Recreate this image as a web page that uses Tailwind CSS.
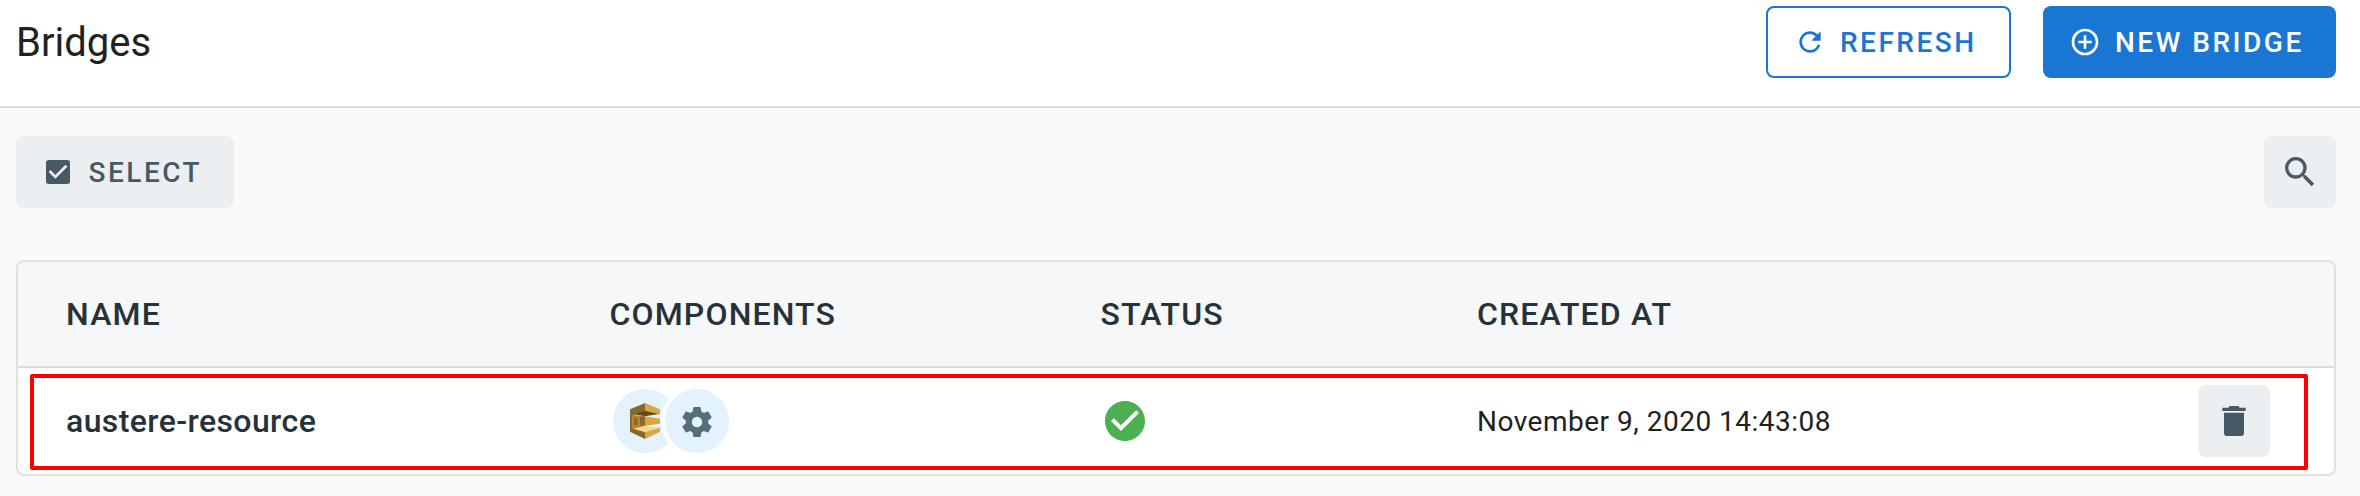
<!DOCTYPE html>
<html lang="en">
<head>
<meta charset="utf-8">
<title>Bridges</title>
<script src="https://cdn.jsdelivr.net/npm/@tailwindcss/browser@4"></script>
</head>
<body class="h-[496px] w-[2360px] overflow-hidden bg-[#fafafa] font-[Roboto,sans-serif] text-[#212121]">
<header class="flex h-[108px] items-start justify-between border-b-2 border-[#dcdcdc] bg-white pt-1.5 pr-6 pl-4">
  <h1 class="flex h-[72px] items-center pt-0.5 text-[40px]">Bridges</h1>
  <div class="flex gap-8 text-[28px] font-medium tracking-[2.5px]">
    <button class="flex h-[72px] w-[245px] items-center gap-3.5 rounded-lg border-2 border-[#1976d2] pl-6.5 text-[#1976d2]">
      <svg class="size-8" viewBox="0 0 24 24" fill="currentColor"><path d="M17.65 6.35A7.958 7.958 0 0 0 12 4a8 8 0 0 0-8 8 8 8 0 0 0 8 8c3.73 0 6.84-2.55 7.73-6h-2.08A5.99 5.99 0 0 1 12 18a6 6 0 0 1-6-6 6 6 0 0 1 6-6c1.66 0 3.14.69 4.22 1.78L13 11h7V4z"/></svg>
      <span class="pt-0.5">REFRESH</span>
    </button>
    <button class="flex h-[72px] w-[293px] items-center gap-3.5 rounded-lg bg-[#1976d2] pl-6.5 text-white">
      <svg class="size-8" viewBox="0 0 24 24" fill="currentColor"><path d="M12 20a8 8 0 1 1 0-16 8 8 0 0 1 0 16m0-18a10 10 0 1 0 0 20 10 10 0 0 0 0-20m1 5h-2v4H7v2h4v4h2v-4h4v-2h-4z"/></svg>
      <span class="pt-0.5">NEW BRIDGE</span>
    </button>
  </div>
</header>
<main class="pt-7 pr-6 pl-4">
  <div class="flex justify-between text-[#455a64]">
    <button class="flex h-[72px] w-[218px] items-center gap-[14.5px] rounded-lg bg-[#eceff1] pl-6.5 text-[28px] font-medium tracking-[2.5px]">
      <svg class="size-8" viewBox="0 0 24 24" fill="currentColor"><path d="M10 17l-5-5 1.410-1.420L10 14.170l7.590-7.590L19 8m0-5H5c-1.110 0-2 .89-2 2v14a2 2 0 0 0 2 2h14a2 2 0 0 0 2-2V5a2 2 0 0 0-2-2z"/></svg>
      <span class="pt-0.5">SELECT</span>
    </button>
    <button class="flex size-[72px] items-center justify-center rounded-lg bg-[#eceff1]" aria-label="Search">
      <svg class="size-10" viewBox="0 0 24 24" fill="currentColor"><path d="M9.500 3A6.500 6.500 0 0 1 16 9.500c0 1.610-.59 3.090-1.560 4.230l.27.27h.79l5 5-1.500 1.500-5-5v-.79l-.27-.27A6.520 6.520 0 0 1 9.500 16a6.500 6.500 0 1 1 0-13m0 2a4.500 4.500 0 1 0 0 9 4.500 4.500 0 0 0 0-9"/></svg>
    </button>
  </div>
  <section class="relative mt-[52px] h-[216px] overflow-hidden rounded-lg border-2 border-[#e0e0e0] bg-white">
    <div class="grid h-[106px] grid-cols-[543.5px_491px_376.5px_1fr] items-center border-b-2 border-[#d9dadb] bg-[#f5f7f9] pl-12 text-[32px] font-medium tracking-[1.15px] text-[#263238]">
      <div>NAME</div><div>COMPONENTS</div><div>STATUS</div><div>CREATED AT</div>
    </div>
    <div class="grid h-[106px] grid-cols-[543px_491.5px_376.5px_1fr_72px] items-center pr-16 pl-12">
      <div class="text-[32px] font-medium tracking-[0.4px] text-[#263238]">austere-resource</div>
      <div class="flex">
        <div class="flex size-[72px] items-center justify-center rounded-full border-4 border-white bg-[#e3f2fd]">
          <svg class="h-9 w-[30px]" viewBox="0 0 90 108">
            <path fill="#876929" d="M0 19 45 0v24L11 35v6L0 38z"/>
            <path fill="#d9a741" d="M45 0 90 19v15L45 24z"/>
            <path fill="#624a1e" d="M11 34 45 23l42 10-42 7z"/>
            <path fill="#876929" d="M0 34h9v48l-9-3z"/>
            <path fill="#b6852f" d="M6 36 45 39v32L6 78z"/>
            <path fill="#876929" d="M12 44l10-1v24l-10-1zM30 41l15-1v28l-15-1z"/>
            <path fill="#d9a741" d="M45 40 90 47v15L45 68z"/>
            <path fill="#fad791" d="M9 78 45 68l45 6-45 15z"/>
            <path fill="#876929" d="M0 74 45 88v20L0 86z"/>
            <path fill="#d9a741" d="M45 88 90 74v12L45 108z"/>
          </svg>
        </div>
        <div class="-ml-5 flex size-[72px] items-center justify-center rounded-full border-4 border-white bg-[#e3f2fd] text-[#546e7a]">
          <svg class="mt-px size-9" viewBox="0 0 24 24" fill="currentColor"><path d="M12 15.5A3.5 3.5 0 0 1 8.5 12 3.5 3.5 0 0 1 12 8.5a3.5 3.5 0 0 1 3.5 3.5 3.5 3.5 0 0 1-3.5 3.5m7.43-2.53c.04-.32.07-.64.07-.97 0-.33-.03-.66-.07-1l2.11-1.63c.19-.15.24-.42.12-.64l-2-3.46c-.12-.22-.39-.31-.61-.22l-2.49 1c-.52-.39-1.06-.73-1.69-.98l-.37-2.65A.506.506 0 0 0 14 2h-4c-.25 0-.46.18-.5.42l-.37 2.65c-.63.25-1.17.59-1.69.98l-2.49-1c-.22-.09-.49 0-.61.22l-2 3.46c-.13.22-.07.49.12.64L4.57 11c-.04.34-.07.67-.07 1 0 .33.03.65.07.97l-2.11 1.66c-.19.15-.25.42-.12.64l2 3.46c.12.22.39.3.61.22l2.49-1.01c.52.4 1.06.74 1.69.99l.37 2.65c.04.24.25.42.5.42h4c.25 0 .46-.18.5-.42l.37-2.65c.63-.26 1.17-.59 1.69-.99l2.49 1.01c.22.08.49 0 .61-.22l2-3.46c.12-.22.07-.49-.12-.64z"/></svg>
        </div>
      </div>
      <div><svg class="size-12 text-[#4caf50]" viewBox="0 0 24 24" fill="currentColor"><path d="M12 2C6.500 2 2 6.500 2 12s4.500 10 10 10 10-4.500 10-10S17.500 2 12 2m-2 15-5-5 1.410-1.410L10 14.170l7.590-7.590L19 8z"/></svg></div>
      <div class="pt-0.5 text-[28px] tracking-[0.5px]">November 9, 2020 14:43:08</div>
      <button class="flex size-[72px] items-center justify-center rounded-lg bg-[#eceff1] text-[#455a64]" aria-label="Delete">
        <svg class="size-10" viewBox="0 0 24 24" fill="currentColor"><path d="M19 4h-3.500l-1-1h-5l-1 1H5v2h14M6 19a2 2 0 0 0 2 2h8a2 2 0 0 0 2-2V7H6z"/></svg>
      </button>
    </div>
    <div class="pointer-events-none absolute top-[112px] left-3 h-24 w-[2278px] rounded-[2px] border-4 border-[#ff0000]"></div>
  </section>
</main>
</body>
</html>
